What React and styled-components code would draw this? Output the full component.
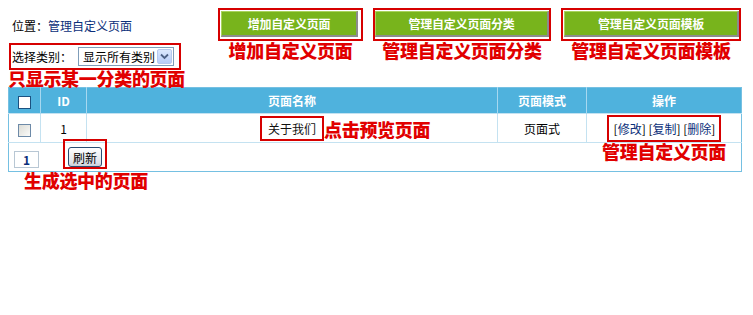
import React from 'react';
import styled, { createGlobalStyle } from 'styled-components';

const GlobalStyle = createGlobalStyle`
  html, body {
    margin: 0;
    padding: 0;
    background: #fff;
  }
  body {
    font-family: "Noto Sans CJK SC", "Liberation Sans", sans-serif;
    font-size: 12px;
    color: #000;
  }
`;

const Page = styled.div`
  width: 753px;
  height: 315px;
  box-sizing: border-box;
  padding: 8px 12px 0 8px;
`;

const TopBar = styled.div`
  display: flex;
  align-items: center;
  height: 35px;
`;

const Location = styled.div`
  padding-left: 4px;
  font-size: 12px;
  line-height: 14px;
`;

const Crumb = styled.span`
  color: #0b2f7a;
`;

const Actions = styled.div`
  margin-left: auto;
  display: flex;
  gap: 10px;
  align-items: flex-start;
  margin-top: -2px;
`;

// red frame used by the callouts on the screenshot
const Marked = styled.span`
  position: relative;
  display: inline-flex;
  align-items: flex-start;
  box-sizing: border-box;
  border: 2px solid #d60000;
  padding: ${(p) => p.$pad || '1px'};
`;

const Note = styled.span`
  position: absolute;
  white-space: nowrap;
  color: #e10000;
  font-family: "Noto Sans CJK SC", sans-serif;
  font-weight: 900;
  font-size: 18px;
  line-height: 20px;
  letter-spacing: -0.3px;
  top: ${(p) => p.$top || 'calc(100% + 1px)'};
  left: ${(p) => p.$left || '50%'};
  transform: ${(p) => (p.$side ? 'none' : 'translateX(-50%)')};
`;

const GreenButton = styled.span`
  display: inline-flex;
  align-items: center;
  justify-content: center;
  box-sizing: border-box;
  width: ${(p) => p.$w}px;
  height: 26px;
  background: #78b41c;
  border-top: 1px solid #a9d25c;
  border-left: 1px solid #a9d25c;
  border-right: 2px solid #8c8c8c;
  border-bottom: 2px solid #8c8c8c;
  color: #fff;
  font-weight: bold;
  font-size: 12px;
  letter-spacing: -0.2px;
`;

const FilterRow = styled.div`
  display: flex;
  height: 27px;
  margin-left: 1px;
`;

const FilterLabel = styled.span`
  align-self: center;
  margin: 0 6px 0 1px;
  font-size: 12px;
`;

const FakeSelect = styled.span`
  display: inline-flex;
  align-items: center;
  box-sizing: border-box;
  width: 96px;
  height: 19px;
  margin-top: 2px;
  border: 1px solid #7f9db9;
  background: #fff;
  padding-left: 4px;
  font-size: 12px;
`;

const SelectText = styled.span`
  flex: 1;
`;

const SelectArrow = styled.span`
  display: flex;
  align-items: center;
  justify-content: center;
  width: 15px;
  height: 15px;
  margin-right: 1px;
  box-sizing: border-box;
  border: 1px solid #b6c9ef;
  border-radius: 2px;
  background: linear-gradient(#dce8fd, #b8cdf8);
`;

const Grid = styled.table`
  margin-top: 17px;
  width: 734px;
  border-collapse: collapse;
  border: 1px solid #75c0e2;
  font-size: 12px;
`;

const HeadCell = styled.th`
  height: 25px;
  padding: 0;
  background: #4fb2dd;
  color: #fff;
  font-weight: bold;
  text-align: center;
  border-left: 1px solid #a6d8f0;
  width: ${(p) => (p.$w ? p.$w + 'px' : 'auto')};
  &:first-child {
    border-left: none;
  }
`;

const Cell = styled.td`
  height: 28px;
  padding: 0;
  text-align: center;
  border-top: 1px solid #c4e2f1;
  border-left: 1px solid #c4e2f1;
  &:first-child {
    border-left: none;
  }
`;

const Check = styled.span`
  display: inline-block;
  vertical-align: middle;
  width: 13px;
  height: 13px;
  box-sizing: border-box;
  border: 1px solid ${(p) => (p.$head ? '#1c5180' : '#6d8aa8')};
  background: ${(p) => (p.$head ? '#fff' : 'linear-gradient(135deg, #dcdcd6, #fbfbf9)')};
`;

const PageLink = styled.span`
  font-size: 12px;
  color: #111;
`;

const Ops = styled.span`
  font-size: 12px;
  color: #0b2f7a;
  white-space: nowrap;
`;

const FooterBar = styled.div`
  display: flex;
  align-items: flex-end;
  height: 26px;
  padding: 0 0 2px 5px;
`;

const PageBox = styled.span`
  display: inline-flex;
  align-items: center;
  justify-content: center;
  box-sizing: border-box;
  width: 25px;
  height: 17px;
  margin-bottom: 1px;
  border: 1px solid #b8c7d4;
  color: #0b2f7a;
  font-weight: bold;
  font-size: 12px;
`;

const RefreshWrap = styled.span`
  margin-left: 24px;
`;

const SmallButton = styled.span`
  display: inline-flex;
  align-items: center;
  justify-content: center;
  box-sizing: border-box;
  width: 34px;
  height: 20px;
  border: 1px solid #2a4d73;
  border-radius: 3px;
  background: linear-gradient(#ffffff, #dfe3ea 80%, #c9cfd9);
  font-size: 12px;
  color: #000;
`;

export default function App() {
  return (
    <>
      <GlobalStyle />
      <Page>
        <TopBar>
          <Location>
            位置：<Crumb>管理自定义页面</Crumb>
          </Location>
          <Actions>
            <Marked $pad="1px 3px 2px 1px">
              <GreenButton $w={137}>增加自定义页面</GreenButton>
              <Note>增加自定义页面</Note>
            </Marked>
            <Marked $pad="1px 0 2px 0">
              <GreenButton $w={174}>管理自定义页面分类</GreenButton>
              <Note>管理自定义页面分类</Note>
            </Marked>
            <Marked $pad="1px 0 2px 1px">
              <GreenButton $w={175}>管理自定义页面模板</GreenButton>
              <Note>管理自定义页面模板</Note>
            </Marked>
          </Actions>
        </TopBar>

        <FilterRow>
          <Marked $pad="0 5px 0 0">
            <FilterLabel>选择类别：</FilterLabel>
            <FakeSelect>
              <SelectText>显示所有类别</SelectText>
              <SelectArrow>
                <svg width="9" height="7" viewBox="0 0 9 7">
                  <path d="M1 1.5 L4.5 5 L8 1.5" fill="none" stroke="#4d6185" strokeWidth="1.8" />
                </svg>
              </SelectArrow>
            </FakeSelect>
            <Note $left="-3px" $side $top="calc(100% + 0px)">
              只显示某一分类的页面
            </Note>
          </Marked>
        </FilterRow>

        <Grid>
          <thead>
            <tr>
              <HeadCell $w={31}>
                <Check $head />
              </HeadCell>
              <HeadCell $w={45}>ID</HeadCell>
              <HeadCell>页面名称</HeadCell>
              <HeadCell $w={88}>页面模式</HeadCell>
              <HeadCell $w={154}>操作</HeadCell>
            </tr>
          </thead>
          <tbody>
            <tr>
              <Cell>
                <Check />
              </Cell>
              <Cell>1</Cell>
              <Cell>
                <Marked $pad="2px 6px 2px 6px">
                  <PageLink>关于我们</PageLink>
                  <Note $left="calc(100% + 2px)" $side $top="1px">
                    点击预览页面
                  </Note>
                </Marked>
              </Cell>
              <Cell>页面式</Cell>
              <Cell>
                <Marked $pad="3px 4px 3px 5px">
                  <Ops>
                    <span style={{ color: '#000' }}>[</span>修改<span style={{ color: '#000' }}>]</span>{' '}
                    <span style={{ color: '#000' }}>[</span>复制<span style={{ color: '#000' }}>]</span>{' '}
                    <span style={{ color: '#000' }}>[</span>删除<span style={{ color: '#000' }}>]</span>
                  </Ops>
                  <Note $top="calc(100% + 1px)">管理自定义页面</Note>
                </Marked>
              </Cell>
            </tr>
            <tr>
              <Cell colSpan={5} style={{ textAlign: 'left' }}>
                <FooterBar>
                  <PageBox>1</PageBox>
                  <RefreshWrap>
                    <Marked $pad="6px 3px 0 3px">
                      <SmallButton>刷新</SmallButton>
                      <Note $left="-41px" $side $top="calc(100% + 3px)">
                        生成选中的页面
                      </Note>
                    </Marked>
                  </RefreshWrap>
                </FooterBar>
              </Cell>
            </tr>
          </tbody>
        </Grid>
      </Page>
    </>
  );
}
